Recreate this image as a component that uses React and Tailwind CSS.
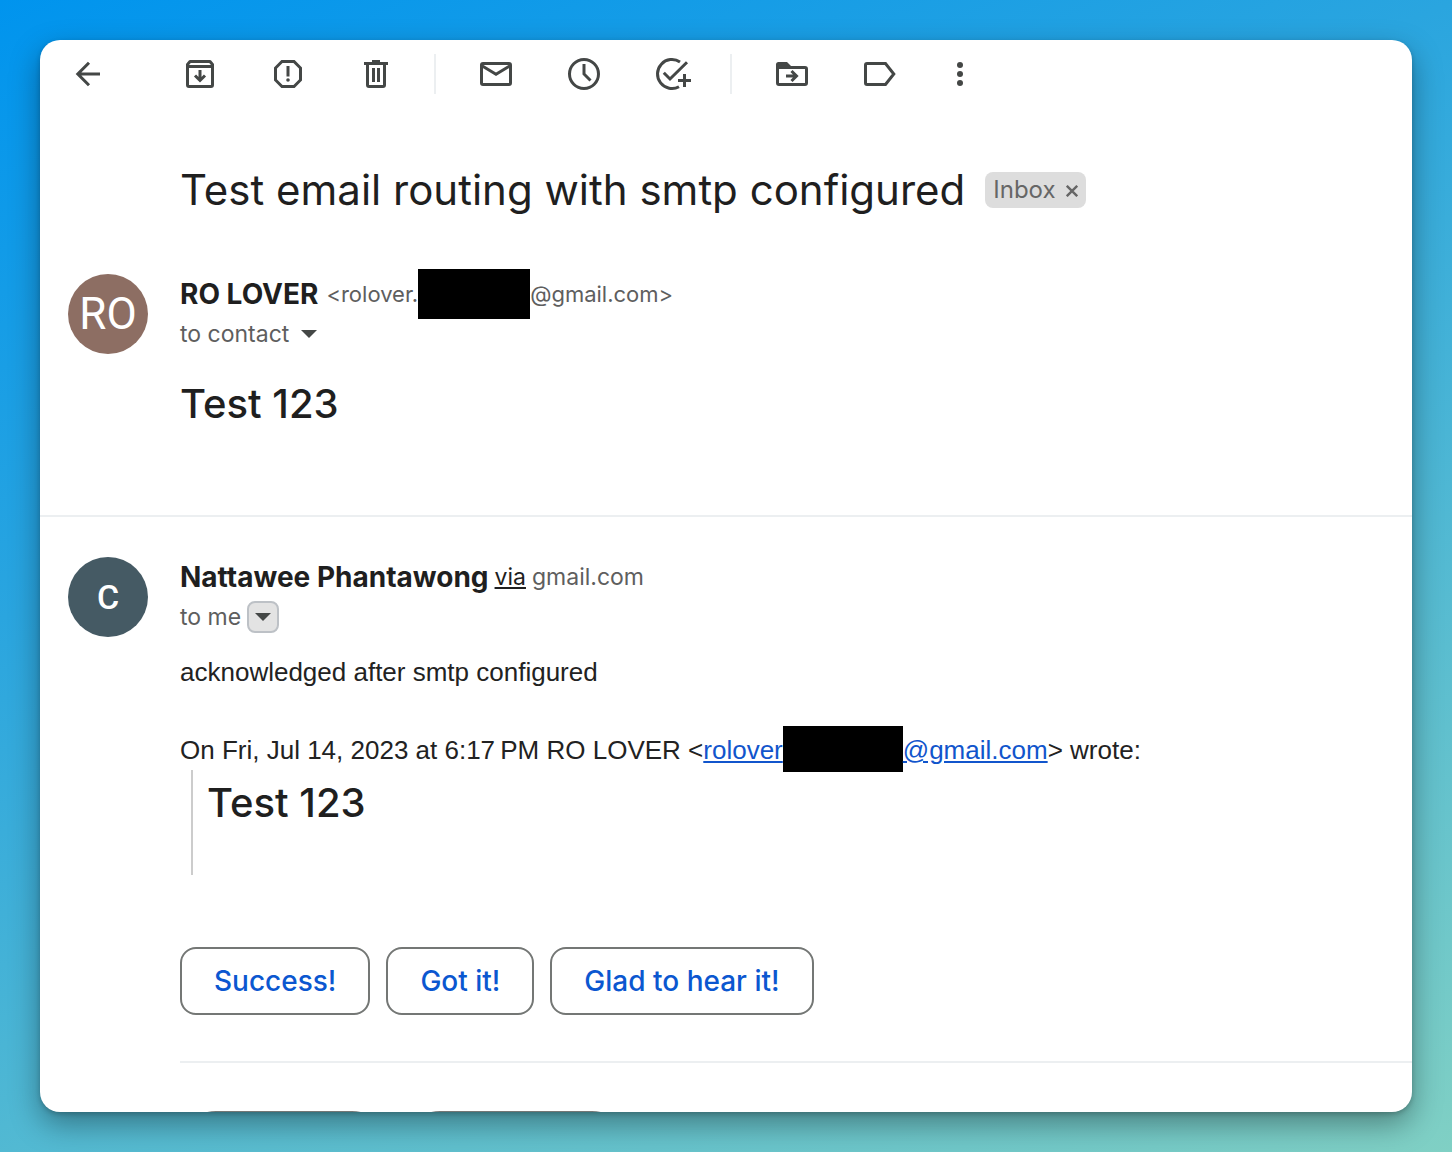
function Icon({ children }) {
  return (
    <svg viewBox="0 0 40 40" className="w-10 h-10" fill="none" stroke="currentColor" strokeWidth="3" aria-hidden="true">
      {children}
    </svg>
  );
}

function ToolbarButton({ label, children }) {
  return (
    <button type="button" aria-label={label} className="shrink-0 w-10 h-10 text-[#444746]">
      <Icon>{children}</Icon>
    </button>
  );
}

function Separator() {
  return <div className="shrink-0 w-0.5 h-10 -ml-0.5 bg-[#eceff1]" />;
}

function Toolbar() {
  return (
    <div className="flex items-center gap-[72px] px-7 py-3.5">
      <ToolbarButton label="Back to Inbox">
        <path d="M32 20H10M21 8.8L9.8 20L21 31.2" />
      </ToolbarButton>

      <div className="flex items-center gap-12">
        <ToolbarButton label="Archive">
          <path d="M10 7.5H30L32.5 10.5V31Q32.5 32.5 31 32.5H9Q7.5 32.5 7.5 31V10.5Z" strokeLinejoin="round" />
          <path d="M7.5 12.5H32.5M20 16V26M15 21.5L20 26.5L25 21.5" />
        </ToolbarButton>
        <ToolbarButton label="Report spam">
          <path d="M14 7.5H26L32.5 14V26L26 32.5H14L7.5 26V14Z" />
          <path d="M20 12V22.5" />
          <circle cx="20" cy="26" r="1.8" fill="currentColor" stroke="none" />
        </ToolbarButton>
        <ToolbarButton label="Delete">
          <path d="M8 9.5H32M16 7.5H24" />
          <path d="M11.5 9.5V31Q11.5 32.5 13 32.5H27Q28.5 32.5 28.5 31V9.5M17.5 14V28M22.5 14V28" />
        </ToolbarButton>
      </div>

      <div className="flex items-center gap-10 -ml-8">
        <Separator />
        <div className="flex items-center gap-12">
          <ToolbarButton label="Mark as unread">
            <rect x="5.5" y="9.5" width="29" height="21" rx="1.5" />
            <path d="M5.5 11.5L20 20.3L34.5 11.5" />
          </ToolbarButton>
          <ToolbarButton label="Snooze">
            <circle cx="20" cy="20" r="14.5" />
            <path d="M20 10V20L26.5 26.5" />
          </ToolbarButton>
          <ToolbarButton label="Add to Tasks">
            <path d="M28 7.9A14.5 14.5 0 1 0 27 32.7" />
            <path d="M11.8 18.8L18 25L35 8.2M26 26.5H39M32.5 20V33" />
          </ToolbarButton>
        </div>
        <Separator />
        <div className="flex items-center gap-12">
          <ToolbarButton label="Move to">
            <path d="M5.5 12V29Q5.5 30.5 7 30.5H33Q34.5 30.5 34.5 29V15Q34.5 13.5 33 13.5H5.5" />
            <path d="M4 14V10.5Q4 8 6.5 8H15L19.5 12.5V14Z" fill="currentColor" stroke="none" />
            <path d="M14 22H24M19.5 17L24.5 22L19.5 27" />
          </ToolbarButton>
          <ToolbarButton label="Labels">
            <path d="M7 9.5H25.5L33.8 20L25.5 30.5H7Q5.5 30.5 5.5 29V11Q5.5 9.5 7 9.5Z" />
          </ToolbarButton>
        </div>
        <ToolbarButton label="More">
          <g fill="currentColor" stroke="none">
            <circle cx="20" cy="11" r="3" />
            <circle cx="20" cy="20" r="3" />
            <circle cx="20" cy="29" r="3" />
          </g>
        </ToolbarButton>
      </div>
    </div>
  );
}

function Caret() {
  return (
    <svg viewBox="0 0 16 8" className="w-4 h-2" fill="#444746" aria-hidden="true">
      <path d="M0 0H16L8 8Z" />
    </svg>
  );
}

function Message({ avatar, children }) {
  return (
    <article className="flex gap-8 pl-7">
      {avatar}
      <div className="flex-1 min-w-0">{children}</div>
    </article>
  );
}

const replies = ['Success!', 'Got it!', 'Glad to hear it!'];

export default function App() {
  return (
    <div className="h-screen p-10 flex bg-[linear-gradient(157deg,#0094ee,#2aa5df_35%,#80d0c4)] font-['Inter',sans-serif] text-[#1f1f1f]">
      <main className="flex-1 min-w-0 overflow-hidden rounded-[20px] bg-white shadow-[0_12px_30px_rgba(0,0,0,0.36),0_2px_5px_rgba(0,0,0,0.2)]">
        <Toolbar />

        <div className="flex items-center gap-5 pl-[140px] pt-[52px]">
          <h1 className="text-[42px] leading-[60px] whitespace-nowrap">Test email routing with smtp configured</h1>
          <span className="flex items-center gap-2.5 h-9 px-2 rounded-lg bg-[#ddd] text-[#666] text-2xl">
            Inbox
            <button type="button" aria-label="Remove label Inbox" className="pt-0.5">
              <svg viewBox="0 0 12 12" className="w-3 h-3" stroke="currentColor" strokeWidth="2.4" aria-hidden="true">
                <path d="M0.8 0.8L11.2 11.2M11.2 0.8L0.8 11.2" />
              </svg>
            </button>
          </span>
        </div>

        <div className="pt-[54px] pb-[81px] border-b-2 border-[#eceff1]">
          <Message
            avatar={
              <div className="shrink-0 w-20 h-20 rounded-full bg-[#8d6e63] text-white text-[44px] font-['Roboto',sans-serif] flex items-center justify-center">
                RO
              </div>
            }
          >
            <div className="flex items-center h-10 text-[22px] text-[#5e5e5e] whitespace-nowrap">
              <span className="mr-2 text-[28px] font-bold text-[#1f1f1f]">RO LOVER</span>
              <span>&lt;rolover.</span>
              <span className="w-28 h-[50px] -my-2 bg-black" />
              <span>@gmail.com&gt;</span>
            </div>
            <div className="flex items-center gap-3 h-10 text-[23px] text-[#5e5e5e]">
              to contact
              <button type="button" aria-label="Show details">
                <Caret />
              </button>
            </div>
            <h2 className="mt-5 text-[40px] leading-[60px] font-medium">Test 123</h2>
          </Message>
        </div>

        <div className="pt-10">
          <Message
            avatar={
              <div className="shrink-0 w-20 h-20 rounded-full bg-[#455a64] text-white text-[34px] font-medium font-['Roboto',sans-serif] flex items-center justify-center">
                C
              </div>
            }
          >
            <div className="flex items-center gap-1.5 h-10 text-[23px] text-[#5e5e5e] whitespace-nowrap">
              <span className="text-[28px] font-bold text-[#1f1f1f]">Nattawee Phantawong</span>
              <a href="#via" className="underline text-[#1f1f1f]">via</a>
              <span>gmail.com</span>
            </div>
            <div className="flex items-center gap-1.5 h-10 text-[23px] text-[#5e5e5e]">
              to me
              <button type="button" aria-label="Show details" className="w-8 h-8 flex items-center justify-center rounded-lg border-2 border-[#bdc1c6] bg-[#e3e3e3]">
                <Caret />
              </button>
            </div>

            <div className="mt-4 text-[26px] leading-[39px] text-[#222] font-['Liberation_Sans',Arial,sans-serif]">
              <p>acknowledged after smtp configured</p>
              <div className="mt-[39px] flex items-center whitespace-nowrap">
                <span>On Fri, Jul 14, 2023 at 6:17&#8239;PM RO LOVER &lt;</span>
                <a href="#sender" className="flex items-center underline text-[#1155cc]">
                  rolover
                  <span className="w-[120px] h-[46px] -mt-2 -mb-1 bg-black" />
                  @gmail.com
                </a>
                <span>&gt; wrote:</span>
              </div>
            </div>
            <blockquote className="ml-[11px] pl-3.5 pb-[39px] border-l-2 border-[#ccc]">
              <h2 className="text-[40px] leading-[66px] font-medium">Test 123</h2>
            </blockquote>

            <div className="mt-[72px] flex gap-4">
              {replies.map((reply) => (
                <button
                  key={reply}
                  type="button"
                  className="h-[68px] px-8 rounded-2xl border-2 border-[#747775] text-[28px] font-medium text-[#0b57d0]"
                >
                  {reply}
                </button>
              ))}
            </div>

            <div className="mt-[46px] pt-12 border-t-2 border-[#eceff1] flex gap-4">
              <button type="button" aria-label="Reply" className="w-[208px] h-[72px] rounded-full border-2 border-[#747775]" />
              <button type="button" aria-label="Forward" className="w-[224px] h-[72px] rounded-full border-2 border-[#747775]" />
            </div>
          </Message>
        </div>
      </main>
    </div>
  );
}
